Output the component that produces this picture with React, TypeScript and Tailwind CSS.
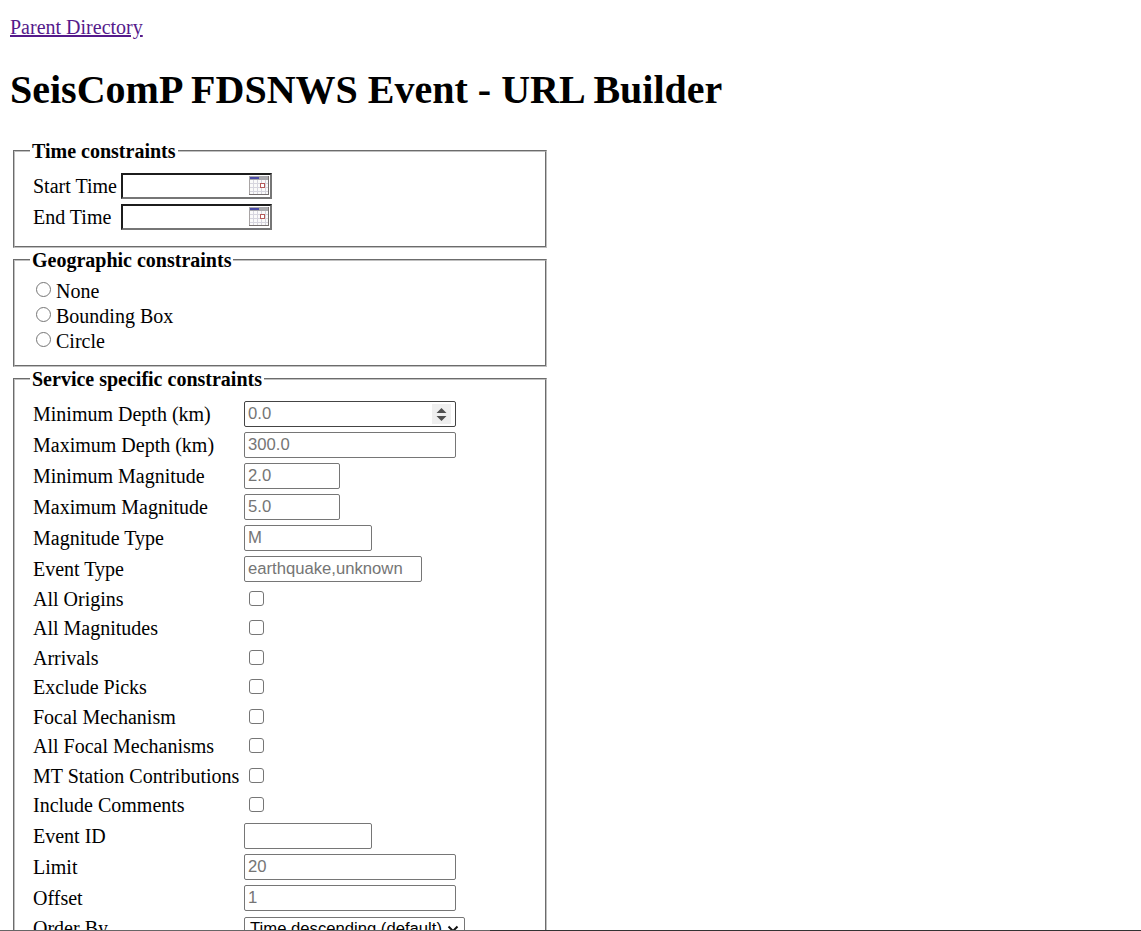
import type { ReactNode } from "react";

function Panel({ title, children, className }: { title: ReactNode; children: ReactNode; className: string }) {
  return (
    <fieldset className={`w-[534px] shrink-0 border-2 border-[#c0c0c0] pl-[18px] ${className}`} style={{ borderStyle: "groove" }}>
      <legend className="-ml-[3px] h-6 px-[2px] font-bold leading-6 whitespace-nowrap">{title}</legend>
      {children}
    </fieldset>
  );
}

function CalendarIcon() {
  return (
    <svg width="20" height="19" viewBox="0 0 20 19" shapeRendering="crispEdges">
      <rect width="20" height="19" fill="#a8a4a4" />
      <rect x="1" y="1" width="18" height="17" fill="#fafafa" />
      <path d="M4.500 4v14M8.500 4v14M12.500 4v14M16.500 4v14M1 7.500h18M1 11.500h18M1 15.500h18" stroke="#d6d5de" fill="none" />
      <rect x="0" y="0" width="20" height="4" fill="#a9a9ad" />
      <rect x="1" y="1" width="9" height="2" fill="#4c4ca6" />
      <rect x="11.500" y="7.500" width="4" height="4" fill="#fff" stroke="#b55a5a" />
      <path d="M19.500 0v19M0 18.500h20" stroke="#777171" />
    </svg>
  );
}

function TimeRow({ label }: { label: string }) {
  return (
    <div className="flex h-[26px] items-start leading-[26px]">
      <label className="w-[88px] shrink-0 whitespace-nowrap">{label}</label>
      <div className="flex h-[26px] w-[151px] justify-end border-2 border-t-[#1c1c1c] border-r-[#767676] border-b-[#767676] border-l-[#1c1c1c] pt-px pr-px">
        <CalendarIcon />
      </div>
    </div>
  );
}

const inputs = [
  { label: "Minimum Depth (km)", hint: "0.0", width: "w-[212px]", spin: true },
  { label: "Maximum Depth (km)", hint: "300.0", width: "w-[212px]" },
  { label: "Minimum Magnitude", hint: "2.0", width: "w-[96px]" },
  { label: "Maximum Magnitude", hint: "5.0", width: "w-[96px]" },
  { label: "Magnitude Type", hint: "M", width: "w-[128px]" },
  { label: "Event Type", hint: "earthquake,unknown", width: "w-[178px]" },
];

const checks = ["All Origins", "All Magnitudes", "Arrivals", "Exclude Picks", "Focal Mechanism", "All Focal Mechanisms", "MT Station Contributions", "Include Comments"];

const paging = [
  { label: "Event ID", hint: "", width: "w-[128px]" },
  { label: "Limit", hint: "20", width: "w-[212px]" },
  { label: "Offset", hint: "1", width: "w-[212px]" },
];

function FieldRow({ label, hint, width, spin }: { label: string; hint: string; width: string; spin?: boolean }) {
  return (
    <div className="mb-[5px] flex h-[26px] leading-[26px]">
      <label className="w-[211px] shrink-0 whitespace-nowrap">{label}</label>
      <div className={`flex h-[26px] items-center justify-between rounded-[2px] border bg-white pr-1 pl-[3px] font-['Liberation_Sans',sans-serif] text-[16.67px] leading-6 text-[#757575] ${width} ${spin ? "border-[#444]" : "border-[#767676]"}`}>
        <span>{hint}</span>
        {spin && (
          <svg width="19" height="20" viewBox="0 0 19 20">
            <rect width="19" height="20" fill="#efefef" />
            <path d="M4.500 9h10l-5-5zM4.500 12h10l-5 5z" fill="#505050" />
          </svg>
        )}
      </div>
    </div>
  );
}

export default function App() {
  return (
    <main className="flex h-[931px] w-full flex-col overflow-hidden bg-white font-['Liberation_Serif',serif] text-[20px] text-black">
      <div className="flex min-h-0 flex-1 flex-col overflow-hidden">
        <a className="mt-[15px] ml-[10px] h-6 self-start leading-6 text-[#551a8b] underline">Parent Directory</a>
        <h1 className="mt-[27px] ml-[10px] h-12 text-[40px] leading-[48px] font-bold whitespace-nowrap">SeisComP FDSNWS Event - URL Builder</h1>
        <form className="mt-[25px] ml-[13px] flex flex-col">
          <Panel title="Time constraints" className="h-[109px]">
            <div className="flex flex-col gap-[5px] pt-[10px]">
              <TimeRow label="Start Time" />
              <TimeRow label="End Time" />
            </div>
          </Panel>
          <Panel title="Geographic constraints" className="h-[119px]">
            <div className="pt-[7px]">
              {["None", "Bounding Box", "Circle"].map((t) => (
                <label key={t} className="flex h-[25px] items-start pl-[3px] leading-[25px]">
                  <span className="mt-[3px] mr-[5px] size-[15px] rounded-full border border-[#767676] bg-white" />
                  <span>{t}</span>
                </label>
              ))}
            </div>
          </Panel>
          <Panel title="Service specific constraints" className="h-[700px]">
            <div className="pt-[10px]">
              {inputs.map((f) => <FieldRow key={f.label} {...f} />)}
              {checks.map((t) => (
                <div key={t} className="flex leading-6 odd:h-[29px] even:h-[30px]">
                  <label className="w-[216px] shrink-0 whitespace-nowrap">{t}</label>
                  <span className="mt-1 size-[15px] rounded-[3px] border border-[#767676] bg-white" />
                </div>
              ))}
              {paging.map((f) => <FieldRow key={f.label} {...f} />)}
              <div className="flex leading-6">
                <label className="w-[211px]">Order By</label>
                <div className="mt-px flex h-6 w-[221px] items-center justify-between rounded-[2px] border border-[#767676] pr-[5px] pl-[5px] font-['Liberation_Sans',sans-serif] text-[16.67px] leading-[22px] whitespace-nowrap">
                  <span>Time descending (default)</span>
                  <svg width="12" height="8" viewBox="0 0 12 8"><path d="M1.500 1.500L6 6l4.500-4.500" fill="none" stroke="#111" strokeWidth="2" /></svg>
                </div>
              </div>
            </div>
          </Panel>
        </form>
      </div>
      <div className="flex h-px shrink-0 bg-[#333]"><div className="w-[490px] bg-[#666]" /></div>
    </main>
  );
}
